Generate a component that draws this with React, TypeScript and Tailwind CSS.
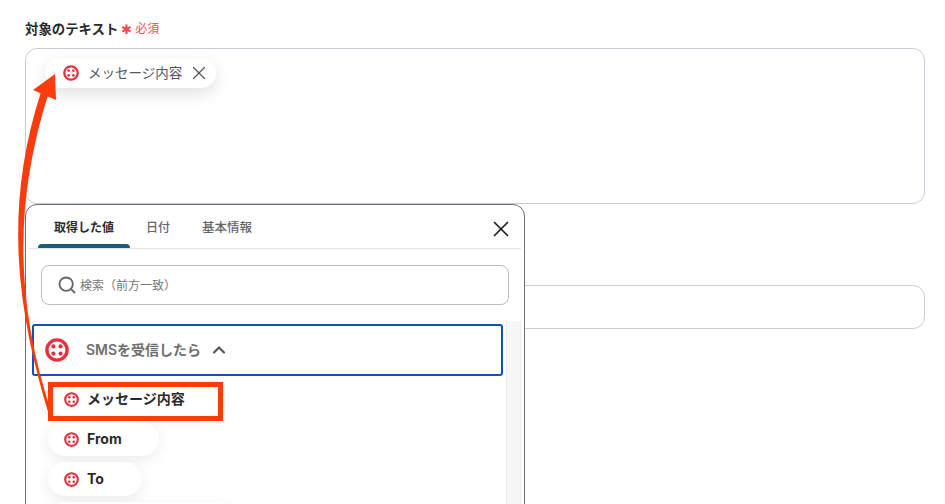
import { ChevronUp, Search, X } from 'lucide-react'

function TwilioIcon({ size }: { size: number }) {
  return (
    <svg width={size} height={size} viewBox="0 0 24 24" className="shrink-0">
      <circle cx="12" cy="12" r="10.1" fill="none" stroke="#e5303f" strokeWidth="3.4" />
      <circle cx="8.4" cy="8.4" r="2.1" fill="#e5303f" />
      <circle cx="15.6" cy="8.4" r="2.1" fill="#e5303f" />
      <circle cx="8.4" cy="15.6" r="2.1" fill="#e5303f" />
      <circle cx="15.6" cy="15.6" r="2.1" fill="#e5303f" />
    </svg>
  )
}

function ValuePill({ label, className }: { label: string; className: string }) {
  return (
    <div className={`flex h-[34px] items-center gap-[8px] rounded-full bg-white pl-[16px] shadow-[0_4px_14px_rgba(0,0,0,0.08)] ${className}`}>
      <TwilioIcon size={15} />
      <span className="text-[14px] leading-[20px] font-bold text-[#2b2b2b]">{label}</span>
    </div>
  )
}

export default function App() {
  return (
    <div className="relative h-[504px] w-[945px] overflow-hidden bg-white pl-[25px] pr-[20px] pt-[19px] font-['Inter','Noto_Sans_CJK_JP',sans-serif]">
      {/* Form fields */}
      <div className="flex h-[20px] items-center">
        <span className="text-[13.4px] font-semibold text-[#2b2b2b]">対象のテキスト</span>
        <span className="ml-[3px] text-[13px] leading-[20px] text-[#f04a55]">✱</span>
        <span className="ml-[3px] text-[12px] text-[#f04a55]">必須</span>
      </div>
      <div className="mt-[9px] h-[156px] rounded-[12px] border border-[#c9ccd6] pl-[19px] pt-[9px]">
        <div className="flex h-[30px] w-[171px] items-center rounded-full bg-white pl-[18px] shadow-[0_6px_16px_rgba(0,0,0,0.12)]">
          <TwilioIcon size={16} />
          <span className="ml-[9px] text-[13.5px] text-[#55585f]">メッセージ内容</span>
          <X size={22} strokeWidth={1.4} className="ml-[6px] text-[#55585f]" />
        </div>
      </div>
      <div className="mt-[81px] h-[44px] rounded-[12px] border border-[#c9ccd6]" />

      {/* Value picker popover */}
      <div className="absolute left-[25px] top-[204px] h-[320px] w-[500px] rounded-[12px] border border-[#6e6e6e] bg-white">
        <div className="mx-[3px] flex h-[44px] items-start border-b border-[#e2e2e2] pl-[9px]">
          <div className="relative flex h-[43px] w-[92px] justify-center pt-[14px] text-[12px] font-semibold text-[#2b2b2b]">
            取得した値
            <span className="absolute bottom-0 left-0 h-[4px] w-full rounded-t-[4px] bg-[#1b5c78]" />
          </div>
          <div className="ml-[16px] pt-[14px] text-[12px] font-medium text-[#666666]">日付</div>
          <div className="ml-[32px] pt-[14px] text-[12.5px] font-medium text-[#666666]">基本情報</div>
          <X size={26} strokeWidth={1.6} className="absolute right-[10px] top-[11px] text-[#1f1f1f]" />
        </div>
        <div className="mx-[15px] mt-[16px] flex h-[40px] items-center rounded-[8px] border border-[#bdbdbd] pl-[15px]">
          <Search size={20} strokeWidth={2.2} className="text-[#666666]" />
          <span className="ml-[3px] translate-y-px text-[12px] text-[#777777]">検索（前方一致）</span>
        </div>
        <div className="mt-[16px] flex pl-[6px]">
          <div className="w-[471px] pt-[3px]">
            <div className="flex h-[52px] items-center rounded-[3px] border-2 border-[#0f52ba] pl-[11px]">
              <TwilioIcon size={24} />
              <span className="ml-[17px] -translate-y-px text-[14px] font-semibold text-[#6f6f6f]">SMSを受信したら</span>
              <ChevronUp size={20} strokeWidth={2.6} className="ml-[8px] text-[#555555]" />
            </div>
            <div className="ml-[16px] mt-[6px] flex flex-col gap-[6px]">
              <ValuePill label="メッセージ内容" className="w-[175px]" />
              <ValuePill label="From" className="w-[111px]" />
              <ValuePill label="To" className="w-[94px]" />
              <ValuePill label="" className="w-[187px]" />
            </div>
          </div>
          <div className="ml-[3px] w-[15px] border-x border-[#ececec] bg-[#f7f7f7]" />
        </div>
      </div>

      {/* Annotation overlay */}
      <div className="absolute left-[48px] top-[382px] h-[39px] w-[175px] border-[5px] border-[#fa3c0c]" />
      <svg width="945" height="504" viewBox="0 0 945 504" className="pointer-events-none absolute left-0 top-0">
        <path d="M49 415 C 20 320, 1 215, 41 92 L 48 95 C 15 200, 14 300, 52 414 Z" fill="#fa3c0c" />
        <polygon points="55,74 33,90 56,100" fill="#fa3c0c" />
      </svg>
    </div>
  )
}
